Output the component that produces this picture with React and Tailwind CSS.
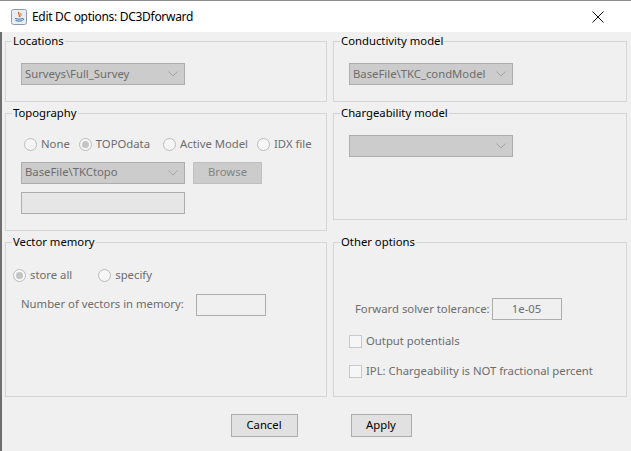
import React from 'react'

const font = { fontFamily: '"Noto Sans", "Open Sans", sans-serif' }

function Panel({ title, className = '', children }) {
  return (
    <fieldset className={`border border-[#d5d5d5] rounded-none m-0 px-[6px] pb-0 pt-0 min-w-0 ${className}`}>
      <legend className="px-[1px] text-[11.3px] leading-[14px] text-black">{title}</legend>
      {children}
    </fieldset>
  )
}

function Chevron() {
  return (
    <svg width="10" height="6" viewBox="0 0 10 6" className="shrink-0">
      <path d="M0.5 0.5 L5 5 L9.5 0.5" fill="none" stroke="#a6a6a6" strokeWidth="1" />
    </svg>
  )
}

function Combo({ value, className = '' }) {
  return (
    <div className={`h-[22px] w-[164px] border border-[#adadad] bg-[#cccccc] flex items-center pl-[3px] pr-[6px] ${className}`}>
      <span className="flex-1 truncate text-[11.3px] text-[#6d6d6d]">{value}</span>
      <Chevron />
    </div>
  )
}

function Radio({ label, checked, className = '' }) {
  return (
    <div className={`flex items-center gap-[4px] ${className}`}>
      <span className="w-[13px] h-[13px] rounded-full border border-[#bcbcbc] bg-[#f6f6f6] flex items-center justify-center">
        {checked && <span className="w-[7px] h-[7px] rounded-full bg-[#c4c4c4]" />}
      </span>
      <span className="text-[11.3px] text-[#6d6d6d]">{label}</span>
    </div>
  )
}

function Check({ label }) {
  return (
    <div className="flex items-center gap-[4px] h-[13px]">
      <span className="w-[13px] h-[13px] border border-[#c8c8c8] bg-[#f6f6f6]" />
      <span className="text-[11.3px] text-[#6d6d6d]">{label}</span>
    </div>
  )
}

function JavaIcon() {
  return (
    <svg width="16" height="16" viewBox="0 0 16 16">
      <rect x="0.5" y="0.5" width="15" height="15" rx="2" fill="#e8eef4" stroke="#8a9bb0" />
      <path d="M8 3 C6 5 10 6 8 8" fill="none" stroke="#e0661c" strokeWidth="1.3" />
      <path d="M10 4 C9 5.5 11 6 9.5 7.5" fill="none" stroke="#e0661c" strokeWidth="1" />
      <path d="M4 9.5 Q8 11 12 9.5 M4.5 11.5 Q8 13 11.5 11.5 M12 9.5 Q13.5 10 12 11" fill="none" stroke="#3a6ea5" strokeWidth="1" />
    </svg>
  )
}

export default function App() {
  return (
    <div className="w-[631px] h-[451px] bg-[#f0f0f0] overflow-hidden flex flex-col border-t border-[#8c8c8c]" style={font}>
      <div className="h-[31px] bg-white flex items-center pl-[11px] pr-[27px] shrink-0">
        <JavaIcon />
        <span className="ml-[5px] text-[12px] tracking-[-0.3px] text-black flex-1">Edit DC options: DC3Dforward</span>
        <svg width="12" height="12" viewBox="0 0 12 12">
          <path d="M0.5 0.5 L11.5 11.5 M11.5 0.5 L0.5 11.5" stroke="#111" strokeWidth="1" />
        </svg>
      </div>
      <div className="flex-1 flex flex-col border-l-2 border-[#6f6f6f]">
        <div className="grid grid-cols-[322px_294px] grid-rows-[68px_125px_162px] gap-x-[6px] gap-y-[4px] pl-[3px] pt-[2px] items-start">
          <Panel title="Locations" className="h-[68px]">
            <Combo value="Surveys\Full_Survey" className="mt-[15px] ml-[9px]" />
          </Panel>
          <Panel title="Conductivity model" className="h-[68px]">
            <Combo value="BaseFile\TKC_condModel" className="mt-[15px] ml-[9px]" />
          </Panel>
          <Panel title="Topography" className="h-[125px]">
            <div className="flex items-center gap-[9px] mt-[16px] ml-[12px]">
              <Radio label="None" />
              <Radio label="TOPOdata" checked />
              <Radio label="Active Model" className="ml-[4px]" />
              <Radio label="IDX file" />
            </div>
            <div className="flex items-center gap-[8px] mt-[9px] ml-[9px]">
              <Combo value="BaseFile\TKCtopo" />
              <div className="h-[22px] w-[69px] border border-[#bfbfbf] bg-[#cccccc] flex items-center justify-center text-[11.3px] text-[#838383]">Browse</div>
            </div>
            <div className="h-[22px] w-[164px] border border-[#adadad] bg-[#e6e6e6] mt-[8px] ml-[9px]" />
          </Panel>
          <Panel title="Chargeability model" className="h-[114px]">
            <Combo value="" className="mt-[15px] ml-[9px]" />
          </Panel>
          <Panel title="Vector memory" className="h-[162px]">
            <div className="flex items-center gap-[26px] mt-[18px] ml-[1px]">
              <Radio label="store all" checked />
              <Radio label="specify" />
            </div>
            <div className="flex items-center gap-[12px] mt-[10px] ml-[9px]">
              <span className="text-[11.3px] text-[#6d6d6d]">Number of vectors in memory:</span>
              <div className="h-[22px] w-[70px] border border-[#adadad] bg-[#f0f0f0]" />
            </div>
          </Panel>
          <Panel title="Other options" className="h-[162px]">
            <div className="flex items-center gap-[2px] mt-[49px] ml-[15px]">
              <span className="text-[11.3px] text-[#6d6d6d]">Forward solver tolerance:</span>
              <div className="h-[22px] w-[70px] border border-[#adadad] bg-[#f0f0f0] flex items-center justify-center text-[11.3px] text-[#6d6d6d]">1e-05</div>
            </div>
            <div className="flex flex-col gap-[17px] mt-[15px] ml-[9px]">
              <Check label="Output potentials" />
              <Check label="IPL: Chargeability is NOT fractional percent" />
            </div>
          </Panel>
        </div>
        <div className="flex justify-center gap-[53px] pl-[9px] mt-[17px]">
          <div className="h-[23px] w-[67px] border border-[#adadad] bg-[#e1e1e1] flex items-center justify-center text-[11.3px] text-black">Cancel</div>
          <div className="h-[23px] w-[61px] border border-[#adadad] bg-[#e1e1e1] flex items-center justify-center text-[11.3px] text-black">Apply</div>
        </div>
      </div>
    </div>
  )
}
